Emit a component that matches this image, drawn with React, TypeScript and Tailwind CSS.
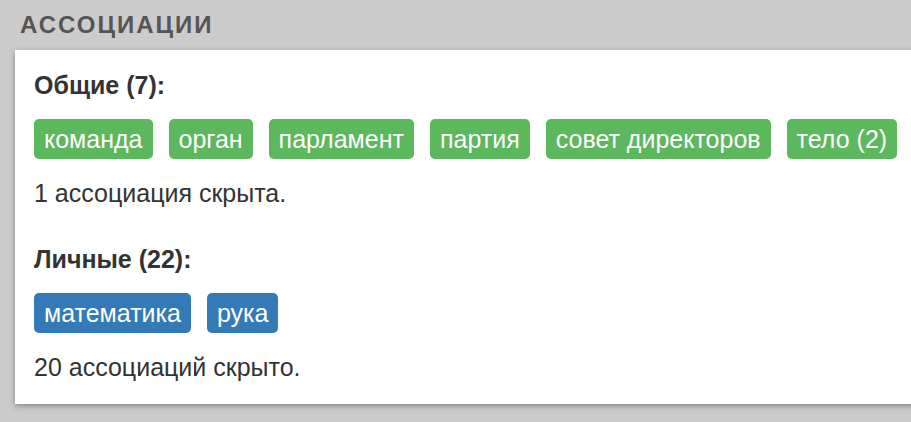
import React from 'react';

interface Group {
  title: string;
  tags: string[];
  color: string;
  hidden: string;
}

const groups: Group[] = [
  {
    title: 'Общие (7):',
    tags: ['команда', 'орган', 'парламент', 'партия', 'совет директоров', 'тело (2)'],
    color: 'bg-[#5cb85c]',
    hidden: '1 ассоциация скрыта.',
  },
  {
    title: 'Личные (22):',
    tags: ['математика', 'рука'],
    color: 'bg-[#337ab7]',
    hidden: '20 ассоциаций скрыто.',
  },
];

export default function App() {
  return (
    <div className="min-h-[422px] w-[911px] overflow-hidden bg-[#cccccc] pl-[15px] pt-[10px] font-['Liberation_Sans',Arial,sans-serif] text-[#333333]">
      <h2 className="ml-[5px] h-[40px] text-[24px] font-bold uppercase leading-[30px] tracking-[2px] text-[#555555]">
        Ассоциации
      </h2>
      <div className="mr-[-20px] bg-white pb-[22px] pl-[19px] pt-[20px] shadow-[0_2px_6px_rgba(0,0,0,0.35)]">
        {groups.map((g, i) => (
          <div key={g.title} className={i > 0 ? 'mt-[36px]' : ''}>
            <h3 className="text-[25px] font-bold leading-[30px]">{g.title}</h3>
            <div className="mt-[19px] flex flex-wrap gap-[16px]">
              {g.tags.map((t) => (
                <span
                  key={t}
                  className={`${g.color} rounded-[5px] px-[10px] text-[25px] leading-[40px] text-white`}
                >
                  {t}
                </span>
              ))}
            </div>
            <p className="mt-[19px] text-[25px] leading-[30px]">{g.hidden}</p>
          </div>
        ))}
      </div>
    </div>
  );
}
